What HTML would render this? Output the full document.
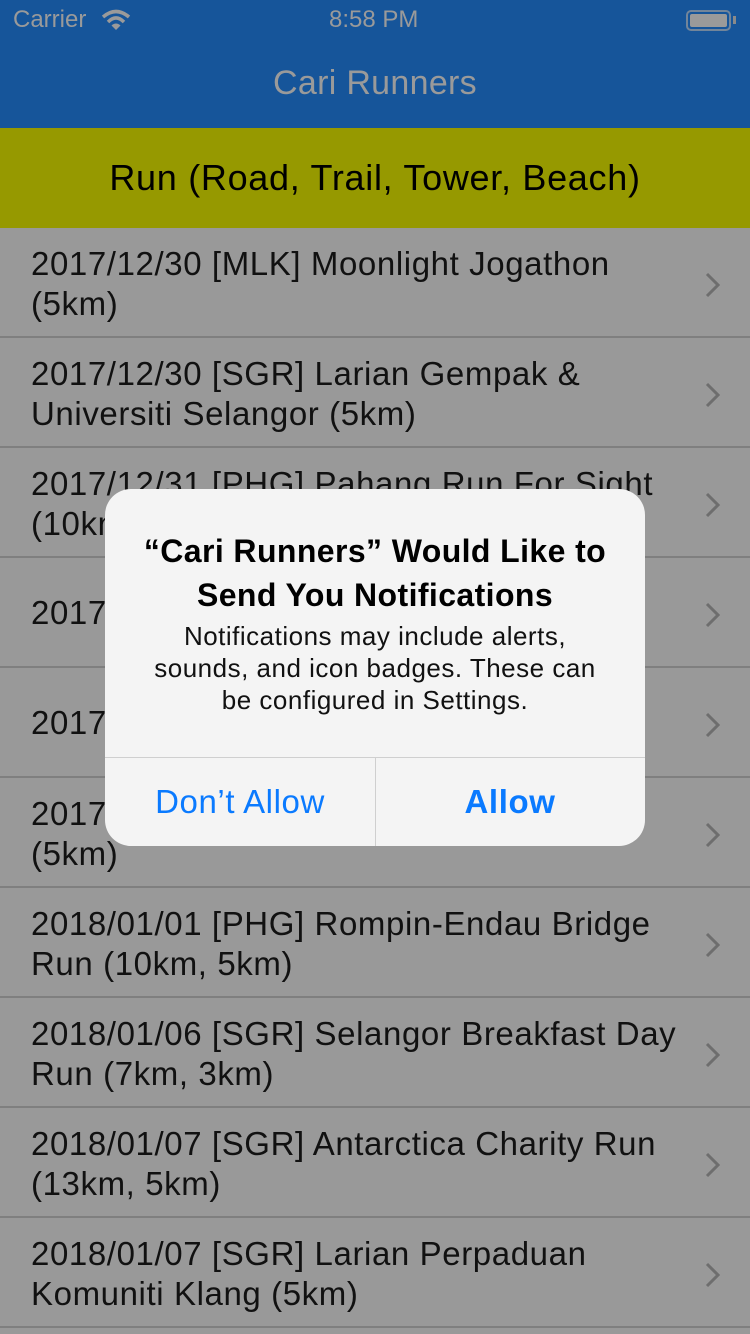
<!DOCTYPE html>
<html><head><meta charset="utf-8"><style>
*{margin:0;padding:0;box-sizing:border-box}
body{width:750px;height:1334px;overflow:hidden;background:#999;font-family:"Liberation Sans",sans-serif;position:relative}
.top{position:absolute;left:0;top:0;width:750px;height:128px;background:#16559a}
.sb{position:absolute;top:6px;font-size:24px;color:#9a9a9a}
.title{position:absolute;top:64px;width:750px;text-align:center;font-size:34px;letter-spacing:0.3px;color:#9a9a9a}
.band{position:absolute;top:128px;left:0;width:750px;height:100px;background:#969900;text-align:center;font-size:36px;letter-spacing:0.7px;line-height:100px;color:#000}
.row{position:absolute;left:0;width:750px;height:110px;border-bottom:2px solid #7f7f7f}
.row .t{position:absolute;left:31px;top:16px;width:670px;font-size:33px;letter-spacing:0.6px;line-height:40px;color:#111;white-space:nowrap;overflow:hidden}
.row .t.one{top:35px}
.row svg{position:absolute;left:704px;top:43px}
.alert{position:absolute;left:105px;top:489px;width:540px;height:357px;background:#f4f4f4;border-radius:26px;overflow:hidden;text-align:center}
.at{position:absolute;top:40px;width:540px;font-size:32px;letter-spacing:0.4px;font-weight:bold;line-height:44px;color:#000}
.am{position:absolute;top:131px;width:540px;font-size:26px;letter-spacing:0.5px;line-height:32px;color:#111}
.hs{position:absolute;top:268px;left:0;width:540px;height:1px;background:#cfcfcf}
.vs{position:absolute;top:268px;left:270px;width:1px;height:89px;background:#cfcfcf}
.b{position:absolute;top:268px;width:270px;height:89px;line-height:89px;font-size:33px;letter-spacing:0.6px;color:#0a7aff}
</style></head><body>
<div class="top">
<div class="sb" style="left:13px">Carrier</div>
<svg style="position:absolute;left:101px;top:9px" width="30" height="22" viewBox="0 0 30 22"><path d="M2 8 Q15 -3 28 8" stroke="#9a9a9a" stroke-width="3.5" fill="none"/><path d="M7 13 Q15 5 23 13" stroke="#9a9a9a" stroke-width="3.5" fill="none"/><path d="M10.5 16.5 L15 21 L19.5 16.5 Q15 12.5 10.5 16.5Z" fill="#9a9a9a"/></svg>
<div class="sb" style="left:329px">8:58 PM</div>
<div style="position:absolute;left:686px;top:10px;width:45px;height:21px;border:2px solid #9a9a9a;border-radius:5px;opacity:.7"></div>
<div style="position:absolute;left:690px;top:14px;width:37px;height:13px;background:#9a9a9a;border-radius:2px"></div>
<div style="position:absolute;left:733px;top:16px;width:3px;height:8px;background:#8a8a8a"></div>
<div class="title">Cari Runners</div>
</div>
<div class="band">Run (Road, Trail, Tower, Beach)</div>

<div class="row" style="top:228px"><div class="t">2017/12/30 [MLK] Moonlight Jogathon<br>(5km)</div><svg width="18" height="28"><path d="M3 3 L14 14 L3 25" stroke="#6e6e6e" stroke-width="3" fill="none"/></svg></div>
<div class="row" style="top:338px"><div class="t">2017/12/30 [SGR] Larian Gempak &amp;<br>Universiti Selangor (5km)</div><svg width="18" height="28"><path d="M3 3 L14 14 L3 25" stroke="#6e6e6e" stroke-width="3" fill="none"/></svg></div>
<div class="row" style="top:448px"><div class="t">2017/12/31 [PHG] Pahang Run For Sight<br>(10km)</div><svg width="18" height="28"><path d="M3 3 L14 14 L3 25" stroke="#6e6e6e" stroke-width="3" fill="none"/></svg></div>
<div class="row" style="top:558px"><div class="t one">2017/12/31 [KL] New Year Run</div><svg width="18" height="28"><path d="M3 3 L14 14 L3 25" stroke="#6e6e6e" stroke-width="3" fill="none"/></svg></div>
<div class="row" style="top:668px"><div class="t one">2017/12/31 [JHR] Countdown Run</div><svg width="18" height="28"><path d="M3 3 L14 14 L3 25" stroke="#6e6e6e" stroke-width="3" fill="none"/></svg></div>
<div class="row" style="top:778px"><div class="t">2017/12/31 [SGR] Night Run<br>(5km)</div><svg width="18" height="28"><path d="M3 3 L14 14 L3 25" stroke="#6e6e6e" stroke-width="3" fill="none"/></svg></div>
<div class="row" style="top:888px"><div class="t">2018/01/01 [PHG] Rompin-Endau Bridge<br>Run (10km, 5km)</div><svg width="18" height="28"><path d="M3 3 L14 14 L3 25" stroke="#6e6e6e" stroke-width="3" fill="none"/></svg></div>
<div class="row" style="top:998px"><div class="t">2018/01/06 [SGR] Selangor Breakfast Day<br>Run (7km, 3km)</div><svg width="18" height="28"><path d="M3 3 L14 14 L3 25" stroke="#6e6e6e" stroke-width="3" fill="none"/></svg></div>
<div class="row" style="top:1108px"><div class="t">2018/01/07 [SGR] Antarctica Charity Run<br>(13km, 5km)</div><svg width="18" height="28"><path d="M3 3 L14 14 L3 25" stroke="#6e6e6e" stroke-width="3" fill="none"/></svg></div>
<div class="row" style="top:1218px"><div class="t">2018/01/07 [SGR] Larian Perpaduan<br>Komuniti Klang (5km)</div><svg width="18" height="28"><path d="M3 3 L14 14 L3 25" stroke="#6e6e6e" stroke-width="3" fill="none"/></svg></div>

<div class="alert">
<div class="at">“Cari Runners” Would Like to<br>Send You Notifications</div>
<div class="am">Notifications may include alerts,<br>sounds, and icon badges. These can<br>be configured in Settings.</div>
<div class="hs"></div><div class="vs"></div>
<div class="b" style="left:0">Don’t Allow</div>
<div class="b" style="left:270px;font-weight:bold">Allow</div>
</div>
</body></html>
